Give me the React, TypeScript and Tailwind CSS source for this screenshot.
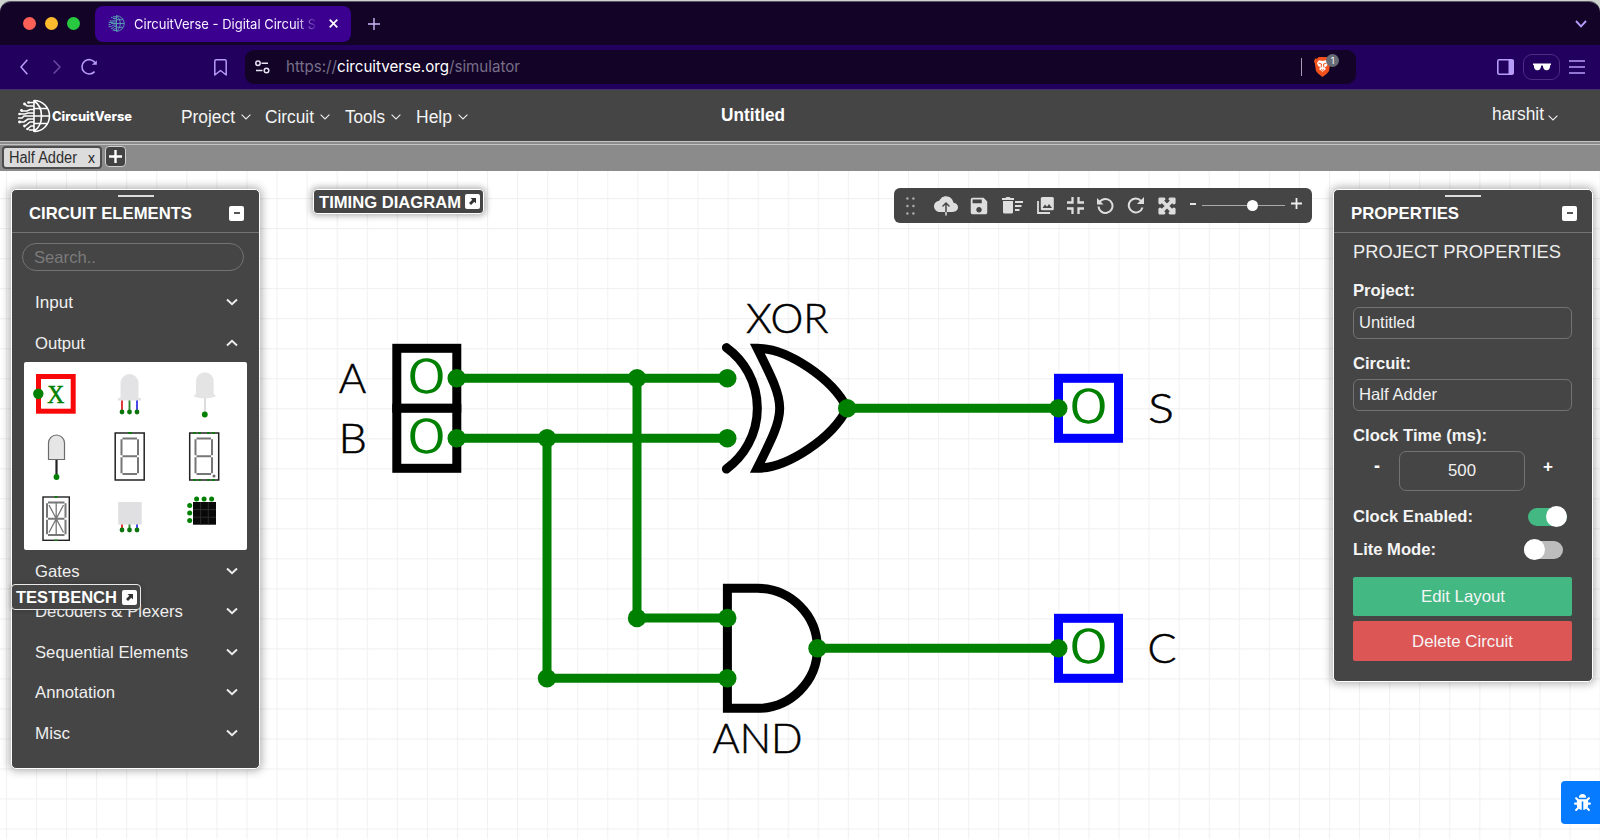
import React from "react";
import { FaBug, FaExpandArrowsAlt } from "react-icons/fa";
import { MdSave } from "react-icons/md";
import { IoCloudUpload } from "react-icons/io5";

const sans = "font-['Liberation_Sans',Arial,sans-serif]";
const inter = "font-['Inter',sans-serif]";

type FitProps = {
  w: number;
  h?: number;
  size: number;
  base: number;
  children: string;
  fill?: string;
  weight?: number;
  family?: string;
  cls?: string;
};

/* A line of text set to an exact advance width. */
function Fit({ w, h = 24, size, base, children, fill = "#fff", weight = 400, family = "Liberation Sans, Arial, sans-serif", cls = "" }: FitProps) {
  return (
    <svg width={w} height={h} className={`block shrink-0 overflow-visible ${cls}`}>
      <text x="0" y={base} fontSize={size} fontWeight={weight} fontFamily={family} fill={fill} textLength={w} lengthAdjust="spacingAndGlyphs">
        {children}
      </text>
    </svg>
  );
}

function Chevron({ up = false }: { up?: boolean }) {
  return (
    <svg width="12" height="8" viewBox="0 0 12 8" fill="none" stroke="#eee" strokeWidth="1.9" className="shrink-0">
      <path d={up ? "M1 6.5L6 1.7L11 6.5" : "M1 1.5L6 6.3L11 1.5"} />
    </svg>
  );
}

function Globe({ size, color, width = 1.3, cls = "" }: { size: number; color: string; width?: number; cls?: string }) {
  return (
    <svg width={size} height={size} viewBox="0 0 34 34" fill="none" stroke={color} strokeWidth={width} className={`shrink-0 ${cls}`}>
      <path d="M17 1.5A15.5 15.5 0 0 1 17 32.5M17 1v32M17 2C27 8 27 26 17 32M17 9.5h13M17 17h15.5M17 24.5h13" />
      <path d="M17 3.5h-5M17 7h-7l-2-2M17 10.5h-4l-3 1.500H5M17 14h-6l-3 1H3M17 17H7l-2 2H1M17 20h-6l-4 3H3M17 23h-4l-5 4M17 27h-3l-3 2.500M17 31h-5" />
      <g fill={color} stroke="none">
        <circle cx="11.500" cy="3.500" r="1.300" />
        <circle cx="7.500" cy="5" r="1.400" />
        <circle cx="4.500" cy="11.500" r="1.400" />
        <circle cx="2.500" cy="15" r="1.300" />
        <circle cx="2.500" cy="23" r="1.400" />
        <circle cx="7.500" cy="27" r="1.400" />
        <circle cx="10.500" cy="30" r="1.300" />
      </g>
    </svg>
  );
}

function TitleBar() {
  return (
    <div className="flex h-[44px] shrink-0 items-center rounded-t-[11px] border-t border-[#5d5668] bg-[#130427] pr-[13px] pl-[23px]">
      <div className="flex gap-[9px]">
        <span className="size-[13px] rounded-full bg-[#fe5f57]" />
        <span className="size-[13px] rounded-full bg-[#febb2e]" />
        <span className="size-[13px] rounded-full bg-[#28c840]" />
      </div>
      <div className="ml-[15px] flex h-[36px] w-[256px] items-center rounded-[8px] bg-[#3b0090] pl-[13px]">
        <Globe size={17} color="#5a9fb5" width={1.9} />
        <div className="ml-[9px] h-[20px] w-[184px] [mask-image:linear-gradient(to_right,black_88%,transparent_100%)]">
          <Fit w={182} h={20} size={13.5} base={15} family="Inter, sans-serif" fill="#f6f1ff">CircuitVerse - Digital Circuit S</Fit>
        </div>
        <svg width="9" height="9" viewBox="0 0 9 9" className="ml-[11px] shrink-0" stroke="#fff" strokeWidth="1.7">
          <path d="M.7.7l7.600 7.600M8.300.7L.7 8.300" />
        </svg>
      </div>
      <svg width="12" height="12" viewBox="0 0 12 12" className="ml-[17px]" stroke="#cbb9f5" strokeWidth="1.400">
        <path d="M6 0v12M0 6h12" />
      </svg>
      <svg width="12" height="8" viewBox="0 0 12 8" className="ml-auto" fill="none" stroke="#b79bfa" strokeWidth="1.900">
        <path d="M1 1l5 5.300L11 1" />
      </svg>
    </div>
  );
}

function AddressBar() {
  return (
    <div className="flex h-[45px] shrink-0 items-center border-b border-[#43316b] bg-[#22005d]">
      <svg width="8" height="16" viewBox="0 0 8 16" className="ml-[20px]" fill="none" stroke="#b79bfa" strokeWidth="1.600">
        <path d="M7.300 .7L1 8l6.300 7.300" />
      </svg>
      <svg width="8" height="16" viewBox="0 0 8 16" className="ml-[25px]" fill="none" stroke="#66489f" strokeWidth="1.600">
        <path d="M.7 1.500L7 8 .7 14.500" />
      </svg>
      <svg width="18" height="18" viewBox="0 0 18 18" className="ml-[19px]" fill="none" stroke="#b79bfa" strokeWidth="1.600">
        <path d="M15.200 4.800A7.200 7.200 0 1 0 14.600 13.600" />
        <path d="M11.800 6.800h5V2.600z" fill="#b79bfa" stroke="none" />
      </svg>
      <svg width="13" height="17" viewBox="0 0 13 17" className="ml-[116px]" fill="none" stroke="#b79bfa" strokeWidth="1.500" strokeLinejoin="round">
        <path d="M.8 2.300Q.8 .8 2.300 .8H10.700Q12.200 .8 12.200 2.300V16L6.500 11.500.8 16z" />
      </svg>
      <div className="ml-[18px] flex h-[34px] w-[1111px] items-center rounded-[9px] bg-[#130427] pl-[10px]">
        <svg width="15" height="14" viewBox="0 0 15 14" fill="none" stroke="#e8e2f5" strokeWidth="1.500">
          <circle cx="3" cy="3.200" r="2.200" />
          <path d="M6.500 3.200H13M1 10.500h6.500" />
          <circle cx="11.500" cy="10.500" r="2.300" />
        </svg>
        <svg width="234" height="24" className="ml-[16px] overflow-visible">
          <text x="0" y="17" fontSize="16" fontFamily="Inter, sans-serif" fill="#776e88" textLength="234" lengthAdjust="spacingAndGlyphs">
            https://<tspan fill="#fff">circuitverse.org</tspan>/simulator
          </text>
        </svg>
        <span className="ml-auto h-[18px] w-[1.500px] bg-[#a69fb4]" />
        <div className="relative mr-[24px] ml-[12px] w-[18px]">
          <svg width="17" height="20" viewBox="0 0 17 20">
            <path d="M4.500 0h8l1.500 1.800 2-.2 1 3-.8 2L15 14l-2 2.500L8.500 20 4 16.500 2 14 .8 6.600 0 4.600l1-3 2 .2z" fill="#f4511c" />
            <path d="M8.500 4l3.500-.7 2 2.500-1 3-2 1.500.8 2-3.300 2.400-3.300-2.400.8-2-2-1.500-1-3 2-2.500z" fill="#fff" />
            <path d="M4.500 6l3 1-.5 3.500M12.500 6l-3 1 .5 3.500M7 12.500l1.500.8 1.500-.8" fill="none" stroke="#f4511c" />
          </svg>
          <span className={`absolute -top-[3px] left-[12px] flex size-[13px] items-center justify-center rounded-full bg-[#666b75] text-[9px] text-white ${inter}`}>1</span>
        </div>
      </div>
      <svg width="17" height="16" viewBox="0 0 17 16" className="ml-[141px]">
        <rect x=".8" y=".8" width="15.400" height="14.400" rx="1.500" fill="none" stroke="#b79bfa" strokeWidth="1.600" />
        <path d="M11.500 1h5v14h-5z" fill="#b79bfa" />
      </svg>
      <div className="ml-[9px] flex h-[26px] w-[37px] items-center justify-center rounded-[9px] border border-[#4b2d84]">
        <svg width="18" height="8" viewBox="0 0 18 8">
          <path d="M0 .5h18v1.300l-.8.400C17 6 15.500 7.300 13.500 7.300 11 7.300 10 5 9.800 2.500H8.200C8 5 7 7.300 4.500 7.300 2.500 7.300 1 6 .8 2.200L0 1.800z" fill="#fff" />
        </svg>
      </div>
      <svg width="16" height="14" viewBox="0 0 16 14" className="ml-[9px]" stroke="#b79bfa" strokeWidth="1.400">
        <path d="M0 1h16M0 7h16M0 13h16" />
      </svg>
    </div>
  );
}

function MenuItem({ label, w, gap }: { label: string; w: number; gap: number }) {
  return (
    <div className="flex items-center" style={{ marginRight: gap }}>
      <Fit w={w} size={18} base={18.5} fill="#f4f4f4">{label}</Fit>
      <svg width="10" height="6" viewBox="0 0 10 6" fill="none" stroke="#eee" strokeWidth="1.100" className="mt-[2px] ml-[6px]">
        <path d="M.6.6L5 5 9.400.6" />
      </svg>
    </div>
  );
}

function Navbar() {
  return (
    <div className="flex h-[51px] shrink-0 items-center bg-[#454545]">
      <Globe size={34} color="#fff" width={1.6} cls="ml-[17px]" />
      <Fit w={80} h={20} size={12.5} base={14.5} weight={800} family="Inter, sans-serif" cls="ml-[1px]">CircuitVerse</Fit>
      <div className="ml-[49px] flex">
        <MenuItem label="Project" w={54} gap={14} />
        <MenuItem label="Circuit" w={49} gap={15} />
        <MenuItem label="Tools" w={40} gap={14.5} />
        <MenuItem label="Help" w={36} gap={0} />
      </div>
      <Fit w={64} size={18} base={16.5} weight={700} cls="ml-[253px]">Untitled</Fit>
      <div className="mr-[42px] ml-auto flex items-center">
        <Fit w={52} size={18} base={15.5} fill="#f4f4f4">harshit</Fit>
        <svg width="10" height="6" viewBox="0 0 10 6" fill="none" stroke="#eee" strokeWidth="1.100" className="mt-[4px] ml-[4px]">
          <path d="M.6.6L5 5 9.400.6" />
        </svg>
      </div>
    </div>
  );
}

function CircuitTabs() {
  return (
    <div className="flex h-[30px] shrink-0 flex-col bg-[#8b8b8b]">
      <div className="h-[4px] border-t border-b border-[#c4c4c4]" />
      <div className="flex items-start pt-[1px] pl-[2px]">
        <div className="flex h-[23px] w-[100px] items-center rounded-[4px] border-2 border-[#4d4d4d] bg-[#dcdcdc] pl-[5px]">
          <Fit w={68} h={20} size={16} base={14.5} fill="#2e2e2e">Half Adder</Fit>
          <Fit w={7} h={20} size={15} base={14.5} fill="#222" cls="ml-[11px]">x</Fit>
        </div>
        <div className="ml-[3px] flex size-[21px] items-center justify-center rounded-[4px] border border-[#d0d0d0] bg-[#434343]">
          <svg width="13" height="13" viewBox="0 0 13 13" stroke="#fff" strokeWidth="2.400"><path d="M6.500 0v13M0 6.500h13" /></svg>
        </div>
      </div>
    </div>
  );
}

const G = "#008000";

function Pin({ x, y }: { x: number; y: number }) {
  return <circle cx={x} cy={y} r="9.200" fill={G} />;
}

type LabelProps = { x: number; y: number; w: number; fill?: string; children: string; size?: number; edge?: number };

function Label({ x, y, w, fill = "#000", children, size = 41, edge = 0.5 }: LabelProps) {
  return (
    <text x={x} y={y} fontFamily="Lato, sans-serif" fontWeight={300} fontSize={size} fill={fill} stroke={fill} strokeWidth={edge} textLength={w} lengthAdjust="spacingAndGlyphs">
      {children}
    </text>
  );
}

function Circuit() {
  return (
    <svg width="1600" height="668" viewBox="0 171 1600 668" className="block">
      <defs>
        <pattern id="grid" x="5.900" y="168" width="30.070" height="30.020" patternUnits="userSpaceOnUse">
          <path d="M.5 0V30.100M0 .5H30.100" stroke="#f1f1f1" strokeWidth="1.200" />
        </pattern>
      </defs>
      <rect x="0" y="171" width="1600" height="668" fill="url(#grid)" />
      <g fill="#fff" stroke="#000" strokeWidth="9">
        <rect x="396.800" y="348.300" width="60" height="60" />
        <rect x="396.800" y="408.300" width="60" height="60" />
        <path d="M726.400 347.600A75 75 0 0 1 726.400 469" fill="none" strokeLinecap="round" />
        <path d="M757.200 348.300C787.200 348.300 832.200 378.300 847.200 408.300C832.200 438.300 787.200 468.300 757.200 468.300C787.200 408.300 787.200 408.300 757.200 348.300Z" strokeMiterlimit="10" />
        <path d="M727.400 588.300H757.400A60 60 0 0 1 757.400 708.300H727.400Z" />
      </g>
      <g fill="#fff" stroke="#00f" strokeWidth="9">
        <rect x="1058.500" y="378.300" width="60" height="60" />
        <rect x="1058.500" y="618.300" width="60" height="60" />
      </g>
      <path
        d="M456.700 378.300H727.400M456.700 438.300H727.400M637 378.300V618H727.400M547 438.300V678.300H727.400M847.200 408.300H1058.300M817.500 648.300H1058.300"
        fill="none" stroke={G} strokeWidth="9"
      />
      {[[456.7, 378.3], [456.7, 438.3], [637, 378.3], [547, 438.3], [727.3, 378.3], [727.3, 438.3], [847.2, 408.3], [1058.3, 408.3], [637, 618], [547, 678.3], [727.3, 618], [727.3, 678.3], [817.5, 648.3], [1058.3, 648.3]].map(([x, y]) => (
        <Pin key={`${x}-${y}`} x={x} y={y} />
      ))}
      <Label x={409} y={392.7} w={35} fill={G} size={48} edge={1.4}>0</Label>
      <Label x={409} y={452.7} w={35} fill={G} size={48} edge={1.4}>0</Label>
      <Label x={1071} y={422.7} w={35} fill={G} size={48} edge={1.4}>0</Label>
      <Label x={1071} y={662.7} w={35} fill={G} size={48} edge={1.4}>0</Label>
      <Label x={338.8} y={393} w={27.5}>A</Label>
      <Label x={338.5} y={453} w={28.5}>B</Label>
      <Label x={746} y={333} w={82.5}>XOR</Label>
      <Label x={712.5} y={753} w={90}>AND</Label>
      <Label x={1148} y={423} w={26}>S</Label>
      <Label x={1147.5} y={662.500} w={29}>C</Label>
    </svg>
  );
}

function Segments({ x, y, w, h }: { x: number; y: number; w: number; h: number }) {
  const m = y + h / 2;
  return (
    <g fill="none" stroke="#777" strokeWidth="2">
      <path d={`M${x + 1} ${y}H${x + w - 1}M${x + 1} ${m}H${x + w - 1}M${x + 1} ${y + h}H${x + w - 1}`} />
      <path d={`M${x} ${y + 0.8}V${m - 1}M${x} ${m + 1}V${y + h - 0.8}M${x + w} ${y + 0.8}V${m - 1}M${x + w} ${m + 1}V${y + h - 0.8}`} />
    </g>
  );
}

function Legs({ top, bottom }: { top: number; bottom: number }) {
  return (
    <g>
      <path d={`M122 ${top}V${bottom}`} stroke="#e03030" strokeWidth="1.900" />
      <path d={`M129.500 ${top}V${bottom}`} stroke="#2a8a2a" strokeWidth="1.900" />
      <path d={`M137 ${top}V${bottom}`} stroke="#4040e8" strokeWidth="1.900" />
      {[122, 129.5, 137].map((x) => <circle key={x} cx={x} cy={bottom} r="2.400" fill="#0b750b" />)}
    </g>
  );
}

const cell = "block overflow-visible";

function OutputElements() {
  return (
    <div className="mx-[12px] grid h-[188px] shrink-0 grid-cols-[68px_75px_80px] grid-rows-[61px_67px_60px] rounded-[2px] bg-white">
      <svg className={cell} width="68" height="61" viewBox="24 362 68 61">
        <rect x="38.500" y="376.500" width="34.700" height="34.700" fill="#fff" stroke="#f80808" strokeWidth="5" />
        <circle cx="38.300" cy="393.700" r="5.200" fill={G} />
        <text x="55.700" y="402.500" textAnchor="middle" fontFamily="Liberation Serif, serif" fontWeight="500" fontSize="26" fill={G} stroke={G} strokeWidth=".5" textLength="17" lengthAdjust="spacingAndGlyphs">X</text>
      </svg>
      <svg className={cell} width="75" height="61" viewBox="92 362 75 61">
        <Legs top={398} bottom={412} />
        <path d="M120.500 398V383a9 9 0 0 1 18 0v15h2.500v2.500h-23V398z" fill="#e3e3e6" />
      </svg>
      <svg className={cell} width="80" height="61" viewBox="167 362 80 61">
        <path d="M205 397V414" stroke="#d9d9d9" strokeWidth="1.800" />
        <path d="M196 394V381a8.800 8.800 0 0 1 17.600 0v13q2.500 1 2 2.500-10.800 4-21.600 0-.5-1.500 2-2.500z" fill="#e4e4e4" />
        <circle cx="204.800" cy="414.500" r="2.900" fill={G} />
      </svg>
      <svg className={cell} width="68" height="67" viewBox="24 423 68 67">
        <path d="M56.500 460V476" stroke="#222" strokeWidth="2.200" />
        <path d="M48.500 459.500V443a8 8 0 0 1 16 0v16.500z" fill="#e6e6e6" stroke="#6b6b6b" strokeWidth="1.200" />
        <circle cx="56.500" cy="477" r="2.900" fill={G} />
      </svg>
      <svg className={cell} width="75" height="67" viewBox="92 423 75 67">
        <rect x="115.200" y="433" width="29" height="47" fill="#fff" stroke="#222" strokeWidth="1.500" />
        <Segments x={121.5} y={438.5} w={16.5} h={35.5} />
        <path d="M128 433h4" stroke={G} strokeWidth="1.500" />
      </svg>
      <svg className={cell} width="80" height="67" viewBox="167 423 80 67">
        <rect x="189.700" y="433" width="29" height="47" fill="#fff" stroke="#222" strokeWidth="1.500" />
        <Segments x={195.5} y={438.5} w={16.5} h={35.5} />
        <circle cx="214" cy="476" r="1.500" fill="#666" />
        <path d="M193 433h8M207 433h8M193 480h8M207 480h8" stroke={G} strokeWidth="1.500" strokeDasharray="3 2" />
      </svg>
      <svg className={cell} width="68" height="60" viewBox="24 490 68 60">
        <rect x="43" y="497" width="26.300" height="43.300" fill="#fff" stroke="#222" strokeWidth="1.400" />
        <Segments x={47} y={502.5} w={18.5} h={32.5} />
        <path d="M56.200 503v31M49 505l14.500 27.500M63.500 505L49 532.500" stroke="#777" strokeWidth="1.300" />
        <path d="M54.500 497h3M54.500 540.300h3" stroke={G} strokeWidth="1.300" />
      </svg>
      <svg className={cell} width="75" height="60" viewBox="92 490 75 60">
        <Legs top={522} bottom={530} />
        <rect x="118.200" y="502" width="23.500" height="22.500" fill="#e0e0e2" />
      </svg>
      <svg className={cell} width="80" height="60" viewBox="167 490 80 60">
        <rect x="193" y="502" width="23" height="22.700" fill="#090909" />
        <path d="M200.600 502v22.700M208.300 502v22.700M193 509.600h23M193 517.200h23" stroke="#333" strokeWidth=".8" />
        {[196.6, 204.1, 211.6].map((x) => <circle key={x} cx={x} cy="499" r="2.500" fill={G} />)}
        {[505.5, 513, 520.5].map((y) => <circle key={y} cx="189.700" cy={y} r="2.500" fill={G} />)}
      </svg>
    </div>
  );
}

function PanelHeader({ title, w }: { title: string; w: number }) {
  return (
    <div className="flex h-[43px] shrink-0 flex-col border-b border-[#747474]">
      <span className="mx-auto mt-[5px] h-[2px] w-[36px] shrink-0 bg-[#ddd]" />
      <div className="flex items-center justify-between pr-[15px] pl-[17px]">
        <Fit w={w} h={32} size={17} base={22} weight={700}>{title}</Fit>
        <span className="flex size-[15px] items-center justify-center rounded-[2px] bg-white">
          <span className="h-[1.500px] w-[6px] bg-[#555]" />
        </span>
      </div>
    </div>
  );
}

function Row({ label, w, up = false }: { label: string; w: number; up?: boolean }) {
  return (
    <div className="flex h-[40.400px] shrink-0 items-center justify-between pr-[21px] pl-[23px]">
      <Fit w={w} size={16.5} base={17.5} fill="#efefef">{label}</Fit>
      <Chevron up={up} />
    </div>
  );
}

function ElementsPanel() {
  return (
    <div className="absolute top-[18px] left-[11px] flex h-[580px] w-[249px] flex-col rounded-[5px] border border-white bg-[#454545] shadow-[0_0_8px_2px_rgba(0,0,0,0.3)]">
      <PanelHeader title="CIRCUIT ELEMENTS" w={163} />
      <div className="mx-[10px] mt-[10px] flex h-[28px] w-[222px] shrink-0 items-center rounded-full border border-[#737373] pl-[11px]">
        <Fit w={62} size={16.5} base={17.5} fill="#7b7b7b">Search..</Fit>
      </div>
      <div className="h-[11px] shrink-0" />
      <Row label="Input" w={38} />
      <Row label="Output" w={50} up />
      <div className="-mt-[1px] mb-[1px]">
        <OutputElements />
      </div>
      <Row label="Gates" w={44.5} />
      <Row label="Decoders & Plexers" w={148} />
      <Row label="Sequential Elements" w={153} />
      <Row label="Annotation" w={80} />
      <Row label="Misc" w={35} />
    </div>
  );
}

function PopOut() {
  return (
    <span className="flex size-[15px] items-center justify-center rounded-[2px] bg-white">
      <svg width="9" height="9" viewBox="0 0 9 9" fill="#333">
        <path d="M2.500 1H8v5.500L6.300 4.800 3 8 1 6l3.300-3.200z" />
      </svg>
    </span>
  );
}

function TextField({ value, w }: { value: string; w: number }) {
  return (
    <div className="flex h-[32px] w-[219px] items-center rounded-[6px] border border-[#727272] pl-[5px]">
      <Fit w={w} size={16.5} base={17} fill="#f0f0f0">{value}</Fit>
    </div>
  );
}

function PropertiesPanel() {
  return (
    <div className="absolute top-[18px] left-[1333px] flex h-[493px] w-[260px] flex-col rounded-[5px] border border-white bg-[#454545] shadow-[0_0_8px_2px_rgba(0,0,0,0.3)]">
      <PanelHeader title="PROPERTIES" w={108} />
      <div className="flex flex-col pl-[19px]">
        <Fit w={208} h={36} size={18.5} base={24.5} fill="#ededed">PROJECT PROPERTIES</Fit>
        <Fit w={62} h={38} size={17} base={26.5} weight={700} fill="#f4f4f4">Project:</Fit>
        <TextField value="Untitled" w={56} />
        <Fit w={58} h={40} size={17} base={30} weight={700} fill="#f4f4f4">Circuit:</Fit>
        <TextField value="Half Adder" w={78} />
        <Fit w={134} h={40} size={17} base={30} weight={700} fill="#f4f4f4">Clock Time (ms):</Fit>
        <div className="flex w-[219px] items-start">
          <Fit w={6} size={20} base={21} weight={700} cls="ml-[21px]">-</Fit>
          <div className="ml-[19px] flex h-[40px] w-[126px] items-center justify-center rounded-[7px] border border-[#727272]">
            <Fit w={28} size={17} base={17} fill="#f0f0f0">500</Fit>
          </div>
          <Fit w={10} size={17} base={20.5} weight={700} cls="ml-[18px]">+</Fit>
        </div>
        <div className="mt-[13px] flex h-[25px] w-[214px] items-center justify-between">
          <Fit w={120} size={17} base={16.5} weight={700} fill="#f4f4f4">Clock Enabled:</Fit>
          <span className="flex h-[18px] w-[39px] items-center justify-end rounded-full bg-[#43b883]">
            <span className="size-[21px] shrink-0 rounded-full bg-white" />
          </span>
        </div>
        <div className="mt-[8px] flex h-[25px] w-[210px] items-center justify-between">
          <Fit w={83} size={17} base={16.5} weight={700} fill="#f4f4f4">Lite Mode:</Fit>
          <span className="flex h-[18px] w-[39px] items-center rounded-full bg-[#bdbdbd]">
            <span className="size-[21px] shrink-0 rounded-full bg-white" />
          </span>
        </div>
        <div className="mt-[15px] flex h-[39px] w-[219px] items-center justify-center rounded-[2px] bg-[#43b883]">
          <Fit w={84} size={16.5} base={17} fill="#f5f5f5">Edit Layout</Fit>
        </div>
        <div className="mt-[5px] flex h-[40px] w-[219px] items-center justify-center rounded-[2px] bg-[#dc5656]">
          <Fit w={101} size={16.5} base={18} fill="#f5f5f5">Delete Circuit</Fit>
        </div>
      </div>
    </div>
  );
}

function QuickBar() {
  return (
    <div className="absolute top-[17px] left-[893.500px] flex h-[35px] w-[418px] items-center rounded-[6px] bg-[#454545] pl-[12.500px] text-[#dedede]">
      <svg width="9" height="18" viewBox="0 0 9 18" fill="#a8a8a8">
        {[1.5, 9, 16.5].map((y) => (
          <g key={y}><circle cx="1.400" cy={y} r="1.300" /><circle cx="7.400" cy={y} r="1.300" /></g>
        ))}
      </svg>
      <IoCloudUpload size={24} className="ml-[19px]" />
      <MdSave size={22} className="ml-[10px]" />
      <svg width="21" height="17" viewBox="0 0 21 17" className="ml-[12px]" fill="currentColor">
        <path d="M0 1h3.500l1-1h3l1 1H12v2H0zM1 4h10v11q0 1.500-1.500 1.500h-7Q1 16.500 1 15zM13 4h8v2h-8zM13 8h6.500v2H13zM13 12h4.500v2H13z" />
      </svg>
      <svg width="17" height="17" viewBox="0 0 17 17" className="ml-[14px]">
        <path d="M1 4v12h12" fill="none" stroke="currentColor" strokeWidth="1.800" />
        <rect x="3.800" y="0" width="13" height="13.300" rx="1.500" fill="currentColor" />
        <path d="M5.500 11l2.500-3.500 2 2.300 2-2.800 3 4z" fill="#454545" />
      </svg>
      <svg width="17" height="17" viewBox="0 0 17 17" className="ml-[13px]" fill="none" stroke="currentColor" strokeWidth="2.300">
        <path d="M0 5.500h5.500V0M11.500 0v5.500H17M0 11.500h5.500V17M11.500 17v-5.500H17" />
      </svg>
      <svg width="17" height="17" viewBox="0 0 17 17" className="ml-[12.500px]" fill="none" stroke="currentColor" strokeWidth="2">
        <path d="M1.500 9.500A7 7 0 1 0 5 2.900L2 5" />
        <path d="M0 1v6.500h6.500z" fill="currentColor" stroke="none" />
      </svg>
      <svg width="17" height="17" viewBox="0 0 17 17" className="ml-[13px]" fill="none" stroke="currentColor" strokeWidth="2">
        <path d="M15.500 10.500A7 7 0 1 1 14 3.800L14.500 5" />
        <path d="M17 0v7h-7z" fill="currentColor" stroke="none" />
      </svg>
      <FaExpandArrowsAlt size={18} stroke="currentColor" strokeWidth={40} className="ml-[14px]" />
      <span className="-mt-[4px] ml-[14px] h-[2px] w-[6px] bg-[#e6e6e6]" />
      <span className="relative ml-[6.500px] h-[1.500px] w-[83px] bg-[#a9a9a9]">
        <span className="absolute -top-[5px] left-[45px] size-[11px] rounded-full bg-white" />
      </span>
      <svg width="11" height="11" viewBox="0 0 11 11" className="-mt-[4px] ml-[6px]" stroke="#eee" strokeWidth="1.800"><path d="M5.500 0v11M0 5.500h11" /></svg>
    </div>
  );
}

export default function App() {
  return (
    <div className={`flex h-[839px] w-[1600px] flex-col overflow-hidden bg-[#cdd3cc] pt-[1px] ${sans}`}>
      <TitleBar />
      <AddressBar />
      <Navbar />
      <CircuitTabs />
      <main className="relative h-[668px] shrink-0 overflow-hidden bg-white">
        <Circuit />
        <ElementsPanel />
        <div className="absolute top-[18px] left-[313px] flex h-[25px] w-[171px] items-center justify-between rounded-[4px] border border-white bg-[#454545] pr-[3px] pl-[5px] shadow-[0_0_6px_2px_rgba(0,0,0,0.3)]">
          <Fit w={142} h={22} size={17} base={16.5} weight={700}>TIMING DIAGRAM</Fit>
          <PopOut />
        </div>
        <div className="absolute top-[413px] left-[11px] flex h-[26px] w-[130px] items-center justify-between rounded-[4px] border border-[#e8e8e8] bg-[#454545] pr-[3px] pl-[4px] shadow-[0_0_4px_1px_rgba(0,0,0,0.15)]">
          <Fit w={101} h={22} size={17} base={16.5} weight={700}>TESTBENCH</Fit>
          <PopOut />
        </div>
        <QuickBar />
        <PropertiesPanel />
        <div className="absolute top-[610px] left-[1561px] flex h-[43px] w-[43px] items-center rounded-[4px] bg-[#067bff] pl-[13px]">
          <FaBug size={17} color="#fff" />
        </div>
      </main>
    </div>
  );
}
